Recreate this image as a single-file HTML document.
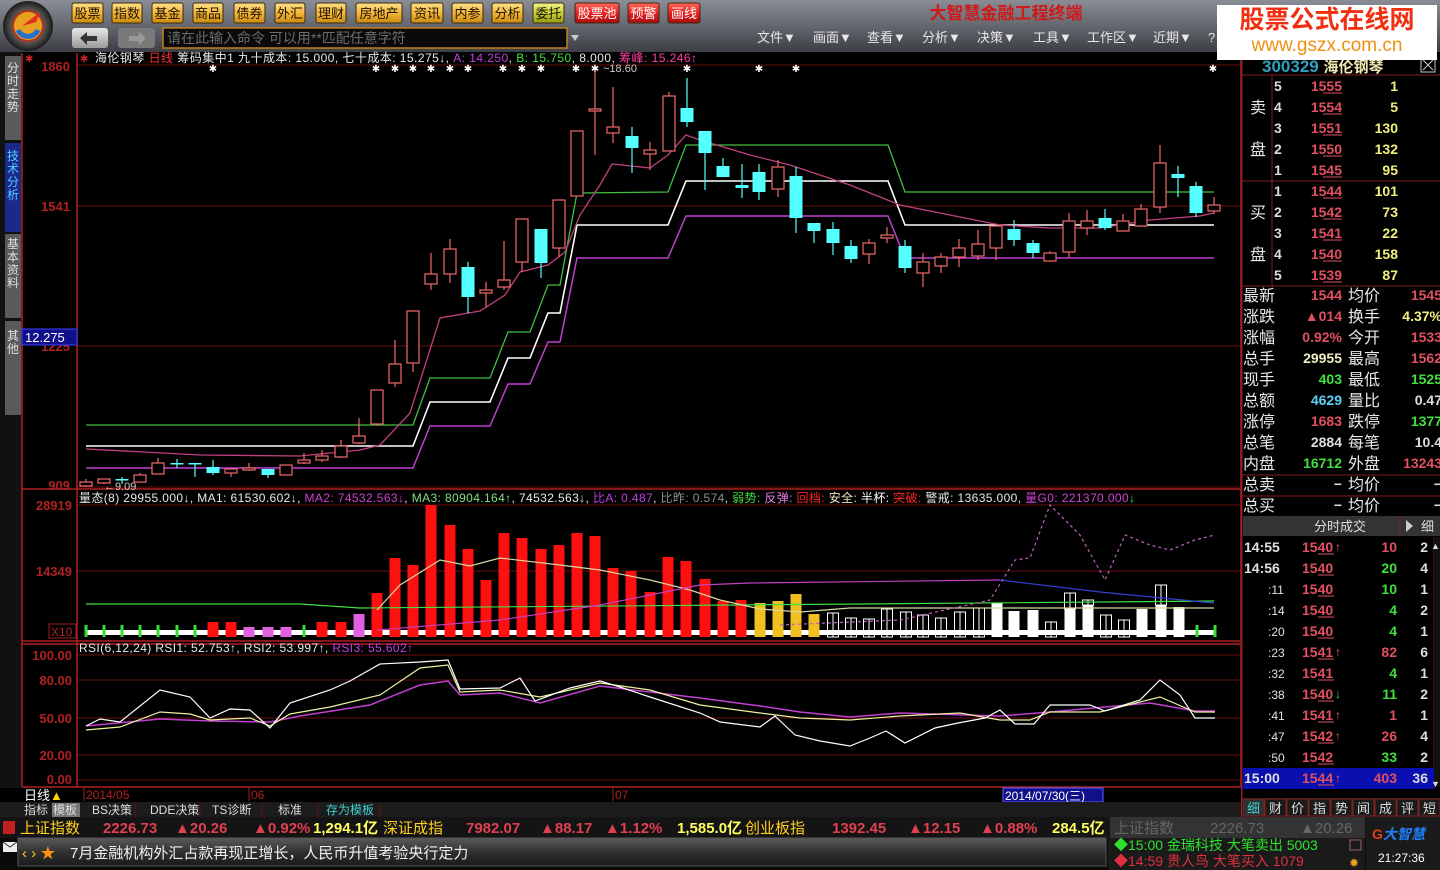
<!DOCTYPE html>
<html><head><meta charset="utf-8">
<style>
html,body{margin:0;padding:0;background:#000;width:1440px;height:870px;overflow:hidden}
svg{display:block}
text{font-family:"Liberation Sans","Noto Sans CJK SC",sans-serif}
</style></head>
<body>
<svg id="s" width="1440" height="870" viewBox="0 0 1440 870" xmlns="http://www.w3.org/2000/svg">
<defs>
<linearGradient id="top" x1="0" y1="0" x2="0" y2="1"><stop offset="0" stop-color="#8a8d95"/><stop offset="0.5" stop-color="#64676e"/><stop offset="1" stop-color="#3c3e44"/></linearGradient>
<linearGradient id="btn" x1="0" y1="0" x2="0" y2="1"><stop offset="0" stop-color="#fde08a"/><stop offset="0.5" stop-color="#f3b637"/><stop offset="1" stop-color="#c98a12"/></linearGradient>
<linearGradient id="btnr" x1="0" y1="0" x2="0" y2="1"><stop offset="0" stop-color="#ff6a5a"/><stop offset="0.5" stop-color="#e62020"/><stop offset="1" stop-color="#a80c0c"/></linearGradient>
<linearGradient id="btng" x1="0" y1="0" x2="0" y2="1"><stop offset="0" stop-color="#f2f28a"/><stop offset="0.5" stop-color="#c8d038"/><stop offset="1" stop-color="#8e9a10"/></linearGradient>
<linearGradient id="gb" x1="0" y1="0" x2="0" y2="1"><stop offset="0" stop-color="#e8e8e8"/><stop offset="1" stop-color="#9a9a9a"/></linearGradient>
<linearGradient id="news" x1="0" y1="0" x2="0" y2="1"><stop offset="0" stop-color="#5a5a5a"/><stop offset="0.5" stop-color="#303030"/><stop offset="1" stop-color="#1a1a1a"/></linearGradient>
<radialGradient id="logo" cx="0.5" cy="0.5" r="0.5"><stop offset="0.55" stop-color="#d03010"/><stop offset="0.7" stop-color="#505050"/><stop offset="1" stop-color="#1a1a1a"/></radialGradient>
</defs>

<rect x="0" y="0" width="1440" height="52" fill="url(#top)"/>
<circle cx="28" cy="26" r="25" fill="url(#logo)"/>
<circle cx="28" cy="26" r="14" fill="#e8a020"/>
<path d="M18 30 a11 11 0 0 0 20 0" stroke="#2070d0" stroke-width="5" fill="none"/>
<path d="M22 26 L40 12 L36 22 Z" fill="#e03020"/>
<g id="btns" font-size="13" text-anchor="middle" fill="#201000"></g>

<rect x="72" y="28" width="36" height="20" rx="3" fill="url(#gb)"/>
<path d="M80 38 l7 -6 v4 h10 v5 h-10 v4z" fill="#333"/>
<rect x="118" y="28" width="37" height="20" rx="3" fill="#7a7a7a"/>
<path d="M146 38 l-7 -6 v4 h-10 v5 h10 v4z" fill="#999"/>
<rect x="163" y="28" width="404" height="20" fill="#0a0a0a" stroke="#c08020" stroke-width="1.5"/>
<text x="167" y="43" font-size="14" fill="#6c6c6c">请在此输入命令    可以用**匹配任意字符</text>
<path d="M571 35 h8 l-4 6z" fill="#ccc"/>
<text x="1006" y="19" font-size="17" font-weight="bold" fill="#d01818" text-anchor="middle">大智慧金融工程终端</text>
<g font-size="13" fill="#e8e8e8">
<text x="757" y="42">文件▼</text><text x="813" y="42">画面▼</text><text x="867" y="42">查看▼</text><text x="922" y="42">分析▼</text><text x="977" y="42">决策▼</text><text x="1033" y="42">工具▼</text><text x="1087" y="42">工作区▼</text><text x="1153" y="42">近期▼</text><text x="1208" y="42">?</text>
</g>

<rect x="0" y="52" width="22" height="736" fill="#111"/>
<g font-size="12">
<rect x="5" y="56" width="16" height="84" fill="#5a5a5a"/>
<rect x="5" y="143" width="16" height="89" fill="#1a2a8a"/>
<rect x="5" y="234" width="16" height="84" fill="#5a5a5a"/>
<rect x="5" y="321" width="16" height="94" fill="#5a5a5a"/>
<g fill="#e0e0e0" text-anchor="middle">
<text x="13" y="72">分</text><text x="13" y="85">时</text><text x="13" y="98">走</text><text x="13" y="111">势</text>
<text x="13" y="160" fill="#50d0ff">技</text><text x="13" y="173" fill="#50d0ff">术</text><text x="13" y="186" fill="#50d0ff">分</text><text x="13" y="199" fill="#50d0ff">析</text>
<text x="13" y="248">基</text><text x="13" y="261">本</text><text x="13" y="274">资</text><text x="13" y="287">料</text>
<text x="13" y="340">其</text><text x="13" y="353">他</text>
</g></g>

<g stroke="#6a1010" stroke-width="1">
<line x1="77" y1="65" x2="1240" y2="65"/>
<line x1="77" y1="206" x2="1240" y2="206"/>
<line x1="77" y1="346" x2="1240" y2="346"/>
<line x1="77" y1="487" x2="1240" y2="487"/>
<line x1="77" y1="505" x2="1240" y2="505"/>
<line x1="77" y1="571" x2="1240" y2="571"/>
<line x1="77" y1="655" x2="1240" y2="655"/>
<line x1="77" y1="680" x2="1240" y2="680"/>
<line x1="77" y1="718" x2="1240" y2="718"/>
<line x1="77" y1="755" x2="1240" y2="755"/>
<line x1="77" y1="780" x2="1240" y2="780"/>
</g>
<g stroke="#b02020" stroke-width="1.5" fill="none">
<line x1="22" y1="489" x2="1240" y2="489"/>
<line x1="22" y1="641" x2="1240" y2="641"/>
<line x1="22" y1="644" x2="1240" y2="644"/>
<line x1="22" y1="787" x2="1240" y2="787"/>
<line x1="77" y1="53" x2="77" y2="787"/>
<line x1="22" y1="53" x2="22" y2="787"/>
<line x1="1241" y1="53" x2="1241" y2="817"/>
</g>
<text x="25" y="62" font-size="10" fill="#d02020">✱</text>
<text x="80" y="62" font-size="10" fill="#d02020">✱</text>

<g font-size="13" font-weight="bold" fill="#b02020" text-anchor="end">
<text x="70" y="71">1860</text><text x="70" y="211">1541</text><text x="70" y="351">1225</text><text x="70" y="490">909</text>
<text x="72" y="510">28919</text><text x="72" y="576">14349</text>
<text x="72" y="660">100.00</text><text x="72" y="685">80.00</text><text x="72" y="723">50.00</text><text x="72" y="760">20.00</text><text x="72" y="784">0.00</text>
</g>
<rect x="49" y="624" width="27" height="14" fill="none" stroke="#a02020"/>
<text x="51" y="636" font-size="12" fill="#b02020">X10</text>
<rect x="22" y="329" width="55" height="16" fill="#10108a" stroke="#4040ff"/>
<text x="25" y="342" font-size="13" fill="#fff">12.275</text>

<text x="95" y="62" font-size="12" fill="#e8e8e8" textLength="602" lengthAdjust="spacing">海伦钢琴 <tspan fill="#ff3030">日线</tspan> 筹码集中1 九十成本: 15.000, 七十成本: 15.275↓, <tspan fill="#c040e0">A: 14.250</tspan>, <tspan fill="#40e040">B: 15.750</tspan>, 8.000, <tspan fill="#ff40a0">筹峰: 15.246↑</tspan></text>
<g id="stars" fill="#fff" font-size="10" text-anchor="middle"></g>
<text x="603" y="72" font-size="11" fill="#ccc">~18.60</text>
<text x="104" y="490" font-size="11" fill="#ccc">←9.09</text>

<g fill="none" stroke-width="1.3">
<polyline stroke="#40c040" points="86,425 413,425 430,378 490,378 508,332 530,332 548,285 560,285 577,193 668,192 686,145 888,145 905,192 1214,192"/>
<polyline stroke="#fff" stroke-width="1.6" points="86,446 413,446 430,402 490,402 508,358 530,358 548,313 560,313 577,225 668,225 686,181 888,181 905,225 1214,225"/>
<polyline stroke="#c040d0" stroke-width="1.5" points="86,468 413,468 430,426 490,426 508,384 530,384 548,342 560,342 577,258 668,258 686,216 888,216 905,258 1214,258"/>
<polyline stroke="#c04080" points="86,449 200,455 300,456 360,450 380,445 410,413 440,318 480,311 505,295 520,272 548,265 565,252 580,215 600,185 612,164 650,168 668,155 686,135 700,140 750,155 790,165 820,175 850,185 900,205 950,215 1000,225 1050,228 1100,228 1150,220 1200,216 1214,213"/>
</g>
<g id="candles"></g>

<text x="79" y="502" font-size="12" fill="#e8e8e8" textLength="1056" lengthAdjust="spacing">量态(8) 29955.000↓, MA1: 61530.602↓, <tspan fill="#d040d0">MA2: 74532.563↓</tspan>, <tspan fill="#80e080">MA3: 80904.164↑</tspan>, 74532.563↓, <tspan fill="#c040e0">比A: 0.487</tspan>, <tspan fill="#909090">比昨: 0.574</tspan>, <tspan fill="#40e040">弱势:</tspan> <tspan fill="#e080e0">反弹:</tspan> <tspan fill="#ff2020">回档:</tspan> <tspan fill="#f0e0c0">安全:</tspan> <tspan fill="#fff">半杯:</tspan> <tspan fill="#ff2020">突破:</tspan> 警戒: 13635.000, <tspan fill="#d040d0">量G0: 221370.000</tspan><tspan fill="#40e040">↓</tspan></text>
<rect x="86" y="630" width="1128" height="5" fill="#fff"/>
<g id="vol"></g>
<g fill="none" stroke-width="1.2">
<polyline stroke="#40e040" points="86,604 200,604 300,604 360,608 860,604 1214,601"/>
<polyline stroke="#d8d8a0" points="377,610 400,585 440,560 470,566 500,558 560,565 600,570 650,580 690,590 720,600 760,609 800,612 850,608 1000,608 1214,608"/>
<polyline stroke="#c040c0" points="377,630 500,620 600,605 700,585 750,583 1000,580"/>
<polyline stroke="#3040d0" points="1000,580 1100,592 1214,603"/>
<polyline stroke="#c060c0" stroke-dasharray="3,3" points="780,625 900,620 990,600 1015,560 1030,558 1050,505 1080,535 1105,580 1125,535 1150,545 1170,550 1195,540 1215,535"/>
</g>

<text x="79" y="652" font-size="12" fill="#e8e8e8" textLength="334" lengthAdjust="spacing">RSI(6,12,24) RSI1: 52.753↑, RSI2: 53.997↑, <tspan fill="#c040e0">RSI3: 55.602↑</tspan></text>
<g fill="none" stroke-width="1.2">
<polyline stroke="#c040d0" stroke-width="1.5" points="86,726 160,719 210,721 270,722 300,716 370,705 420,685 448,681 460,695 500,693 540,703 600,686 650,692 700,698 760,706 800,712 850,717 900,713 1000,716 1050,712 1150,703 1195,711 1215,711"/>
<polyline stroke="#f0f0a0" points="86,730 120,727 160,712 190,714 210,720 250,718 270,726 290,714 330,707 380,695 420,668 448,665 460,692 500,690 540,697 600,683 650,690 700,705 760,713 800,718 850,720 900,716 960,713 1000,720 1030,720 1050,712 1100,712 1160,697 1195,712 1215,712"/>
<polyline stroke="#fff" points="86,726 100,719 120,722 160,690 190,697 210,718 230,709 250,710 270,728 290,703 330,690 350,681 380,664 420,662 448,660 460,689 500,688 520,678 535,701 570,688 600,681 620,687 650,697 700,713 720,722 760,727 775,716 795,735 820,741 850,746 870,738 886,731 905,743 935,728 958,723 985,718 1000,710 1015,724 1034,724 1050,705 1090,705 1105,711 1140,700 1160,680 1180,695 1195,718 1215,718"/>
</g>

<rect x="22" y="788" width="1219" height="14" fill="#000"/>
<text x="24" y="800" font-size="13" fill="#fff">日线<tspan fill="#ffd000">▲</tspan></text>
<line x1="84" y1="788" x2="84" y2="801" stroke="#a02020"/>
<text x="86" y="799" font-size="12" fill="#b02020">2014/05</text>
<line x1="249" y1="788" x2="249" y2="801" stroke="#a02020"/>
<text x="251" y="799" font-size="12" fill="#b02020">06</text>
<line x1="613" y1="788" x2="613" y2="801" stroke="#a02020"/>
<text x="615" y="799" font-size="12" fill="#b02020">07</text>
<rect x="1003" y="788" width="100" height="14" fill="#10108a" stroke="#6060ff"/>
<text x="1005" y="800" font-size="12" fill="#fff">2014/07/30(三)</text>
<rect x="0" y="802" width="1241" height="15" fill="#1c1c1c"/>
<rect x="52" y="803" width="28" height="14" fill="#777"/>
<g font-size="12" fill="#ddd">
<text x="24" y="814">指标</text><text x="53" y="814">模板</text><text x="92" y="814">BS决策</text><text x="150" y="814">DDE决策</text><text x="212" y="814">TS诊断</text><text x="278" y="814">标准</text><text x="326" y="814" fill="#40d0d0">存为模板</text>
</g>
<g stroke="#6a1010"><line x1="135" y1="803" x2="135" y2="817"/><line x1="200" y1="803" x2="200" y2="817"/><line x1="262" y1="803" x2="262" y2="817"/><line x1="318" y1="803" x2="318" y2="817"/><line x1="380" y1="803" x2="380" y2="817"/></g>

<rect x="0" y="817" width="1440" height="21" fill="#141414"/>
<rect x="3" y="821" width="12" height="13" fill="#c02020"/>
<g font-size="15" font-weight="bold">
<text x="20" y="833" fill="#ffd020" font-weight="normal">上证指数</text>
<text x="103" y="833" fill="#e04050">2226.73</text><text x="175" y="833" fill="#e04050">▲20.26</text><text x="253" y="833" fill="#e04050">▲0.92%</text>
<text x="313" y="833" fill="#ffff60">1,294.1亿</text>
<text x="383" y="833" fill="#ffd020" font-weight="normal">深证成指</text>
<text x="466" y="833" fill="#e04050">7982.07</text><text x="540" y="833" fill="#e04050">▲88.17</text><text x="605" y="833" fill="#e04050">▲1.12%</text>
<text x="677" y="833" fill="#ffff60">1,585.0亿</text>
<text x="745" y="833" fill="#ffd020" font-weight="normal">创业板指</text>
<text x="832" y="833" fill="#e04050">1392.45</text><text x="908" y="833" fill="#e04050">▲12.15</text><text x="980" y="833" fill="#e04050">▲0.88%</text>
<text x="1052" y="833" fill="#ffff60">284.5亿</text>
</g>
<rect x="1110" y="817" width="255" height="21" fill="#333"/>
<g font-size="15" fill="#666"><text x="1114" y="833">上证指数</text><text x="1210" y="833">2226.73</text><text x="1300" y="833">▲20.26</text></g>
<rect x="0" y="838" width="1440" height="32" fill="#0a0a0a"/>
<rect x="3" y="842" width="14" height="10" fill="#eee"/><path d="M3 842 l7 5 l7 -5" stroke="#333" fill="none"/>
<rect x="18" y="838" width="1088" height="28" fill="url(#news)" stroke="#555"/>
<text x="22" y="858" font-size="15" fill="#ffd020">‹ › <tspan fill="#ff9010">★</tspan></text>
<text x="70" y="858" font-size="15" fill="#f0f0f0">7月金融机构外汇占款再现正增长，人民币升值考验央行定力</text>
<rect x="1108" y="838" width="257" height="32" fill="#1a1a1a"/>
<text x="1114" y="850" font-size="14" fill="#30e030">◆15:00 金瑞科技 大笔卖出 5003</text>
<text x="1114" y="866" font-size="14" fill="#e03040">◆14:59 贵人鸟  大笔买入 1079</text>
<rect x="1350" y="840" width="11" height="10" fill="none" stroke="#a06060"/>
<text x="1349" y="867" font-size="12" fill="#f0a020">✹</text>
<rect x="1366" y="817" width="74" height="53" fill="#1a1a1a"/>
<text x="1372" y="839" font-size="14" font-weight="bold" fill="#e04020">G<tspan fill="#2080ff" font-style="italic">大智慧</tspan></text>
<text x="1378" y="862" font-size="12" fill="#fff">21:27:36</text>

<rect x="1242" y="53" width="198" height="745" fill="#000"/>
<g stroke="#802020" stroke-width="1">
<line x1="1242" y1="75" x2="1440" y2="75"/><line x1="1242" y1="181" x2="1440" y2="181"/><line x1="1242" y1="286" x2="1440" y2="286"/>
<line x1="1242" y1="475" x2="1440" y2="475"/><line x1="1242" y1="496" x2="1440" y2="496"/>
<line x1="1272" y1="76" x2="1272" y2="286"/>
<line x1="1242" y1="53" x2="1242" y2="817"/>
<line x1="1434" y1="537" x2="1434" y2="788"/>
</g>
<text x="1262" y="72" font-size="17" font-weight="bold" fill="#30a0c0">300329 <tspan fill="#f0e8b0" font-size="15">海伦钢琴</tspan></text>
<rect x="1421" y="58" width="14" height="14" fill="none" stroke="#ccc"/><path d="M1423 60l10 10M1433 60l-10 10" stroke="#ccc"/>
<g font-size="16" fill="#e8e8e8"><text x="1250" y="113">卖</text><text x="1250" y="155">盘</text><text x="1250" y="218">买</text><text x="1250" y="260">盘</text></g>
<g id="ob" font-size="14" font-weight="bold"></g>
<g id="st"></g>
<rect x="1243" y="516" width="197" height="20" fill="#333"/>
<text x="1340" y="531" font-size="13" fill="#ddd" text-anchor="middle">分时成交</text>
<line x1="1400" y1="516" x2="1400" y2="536" stroke="#802020"/>
<path d="M1406 520 l7 6 l-7 6z" fill="#ccc"/>
<text x="1421" y="531" font-size="13" fill="#ddd">细</text>
<rect x="1243" y="768" width="191" height="21" fill="#0a10b0"/>
<g id="tr" font-size="14" font-weight="bold"></g>
<rect x="1434" y="537" width="6" height="250" fill="#111"/>
<text x="1431" y="549" font-size="9" fill="#ddd">▲</text><text x="1431" y="787" font-size="9" fill="#ddd">▼</text>
<rect x="1242" y="798" width="198" height="19" fill="#1a1a1a"/>
<g font-size="13" fill="#ddd" id="rt"></g>
</svg>
<script>
var NS="http://www.w3.org/2000/svg";
function el(p,t,a,txt){var e=document.createElementNS(NS,t);for(var k in a)e.setAttribute(k,a[k]);if(txt!=null)e.textContent=txt;document.getElementById(p).appendChild(e);return e;}
[["股票",72,103],["指数",112,142],["基金",152,183],["商品",193,223],["债券",234,265],["外汇",275,305],["理财",316,346],["房地产",356,402],["资讯",411,443],["内参",452,483],["分析",492,523],["委托",533,564,"g"],["股票池",575,619,"r"],["预警",628,659,"r"],["画线",668,700,"r"]].forEach(function(b){
 el("btns","rect",{x:b[1],y:3,width:b[2]-b[1],height:20,rx:2,fill:b[3]=="r"?"url(#btnr)":b[3]=="g"?"url(#btng)":"url(#btn)",stroke:"#3a2a10"});
 el("btns","text",{x:(b[1]+b[2])/2,y:18,fill:b[3]=="r"?"#fff":"#201000"},b[0]);
});
[213,376,395,413,431,450,468,503,522,541,576,595,687,759,796,1213].forEach(function(x){el("stars","text",{x:x,y:72},"✱");});
var C=[["r",86,482,486,479,487],["r",104,479,483,479,484],["c",122,479,480,477,484],["r",140,475,482,473,482],["r",158,463,474,458,474],["c",177,463,464,459,468],["c",195,463,464,463,477],["c",213,467,473,460,475],["r",231,469,473,469,477],["r",249,468,470,463,471],["c",268,469,475,469,478],["r",286,465,475,465,475],["r",304,460,463,453,464],["r",322,456,460,450,462],["r",341,446,457,440,458],["r",359,436,443,418,444],["r",377,390,424,390,426],["r",395,364,383,340,387],["r",413,311,363,311,372],["r",431,274,284,253,290],["r",450,249,274,239,283],["c",468,267,297,262,313],["r",486,290,293,282,307],["r",504,280,287,241,290],["r",522,219,262,219,272],["c",541,229,263,229,278],["r",559,200,248,200,257],["r",577,131,196,131,196],["r",595,109,111,70,155],["r",613,127,133,87,143],["c",632,136,148,127,173],["r",650,150,154,142,170],["r",669,96,151,92,151],["c",687,108,122,78,127],["c",705,131,153,131,190],["c",723,166,177,158,177],["c",742,185,188,164,198],["c",759,172,192,164,200],["r",778,167,189,160,197],["c",796,176,218,167,233],["c",814,223,231,223,243],["c",833,229,243,222,255],["c",851,246,259,240,263],["r",869,243,254,239,264],["r",887,235,238,227,243],["c",905,246,268,240,273],["r",923,262,273,253,287],["r",941,257,266,253,273],["r",959,248,257,239,267],["r",978,244,256,230,260],["r",996,226,248,226,260],["c",1014,229,240,220,246],["c",1033,243,253,240,258],["r",1050,253,261,251,262],["r",1069,221,252,213,257],["r",1087,221,228,210,235],["c",1105,218,228,209,230],["r",1123,221,231,214,231],["r",1141,209,226,204,227],["r",1160,163,207,145,213],["c",1178,174,178,166,197],["c",1196,186,213,182,217],["r",1214,205,211,197,214]];
C.forEach(function(c){var col=c[0]=="r"?"#f06a6a":"#54ffff";var x=c[1];
 el("candles","line",{x1:x,y1:c[4],x2:x,y2:c[5],stroke:col,"stroke-width":1.2});
 var h=Math.max(c[3]-c[2],1.5);
 if(c[0]=="r")el("candles","rect",{x:x-6,y:c[2],width:12,height:h,fill:"#000",stroke:col,"stroke-width":1.2});
 else el("candles","rect",{x:x-6.5,y:c[2],width:13,height:h,fill:col});
});
var V=[[377,593,"r"],[395,558,"r"],[413,565,"r"],[431,505,"r"],[450,525,"r"],[468,549,"r"],[486,580,"r"],[504,533,"r"],[522,538,"r"],[541,549,"r"],[559,545,"r"],[577,533,"r"],[595,536,"r"],[613,568,"r"],[631,571,"r"],[650,592,"r"],[668,557,"r"],[686,561,"r"],[705,579,"r"],[723,601,"r"],[741,600,"r"],[760,603,"y"],[778,601,"y"],[796,594,"y"],[814,614,"y"],[833,613,"h"],[851,618,"h"],[869,619,"h"],[887,609,"h"],[906,612,"h"],[923,615,"h"],[941,618,"h"],[960,612,"h"],[979,608,"h"],[997,603,"w"],[1014,611,"w"],[1033,610,"w"],[1051,622,"h"],[1070,609,"w",593],[1088,605,"w",600],[1106,615,"h"],[1124,620,"h"],[1142,609,"w"],[1161,605,"w",585],[1179,607,"w"]];
V.forEach(function(v){var x=v[0]-5.5,t=v[1],h=637-t;
 if(v[2]=="r")el("vol","rect",{x:x,y:t,width:11,height:h,fill:"#ff1010"});
 else if(v[2]=="y")el("vol","rect",{x:x,y:t,width:11,height:h,fill:"#f0c020"});
 else if(v[2]=="w")el("vol","rect",{x:x,y:t,width:11,height:h,fill:"#fff"});
 else{el("vol","rect",{x:x,y:t,width:11,height:h,fill:"none",stroke:"#fff"});el("vol","line",{x1:v[0],y1:t,x2:v[0],y2:637,stroke:"#fff"});}
 if(v[3]){el("vol","rect",{x:x,y:v[3],width:11,height:t-v[3],fill:"none",stroke:"#fff"});el("vol","line",{x1:v[0],y1:v[3],x2:v[0],y2:t,stroke:"#fff"});}
});
[[86,"g"],[104,"g"],[122,"g"],[140,"g"],[158,"g"],[177,"g"],[195,"g"],[213,"r"],[231,"r"],[249,"m"],[268,"m"],[286,"m"],[304,"g"],[322,"r"],[341,"r"],[359,"m"],[1197,"g"],[1215,"g"]].forEach(function(v){
 var col=v[1]=="g"?"#30e030":v[1]=="m"?"#e060e0":"#ff1010";var t=v[1]=="r"?622:v[1]=="m"?(v[0]==359?614:627):625;
 if(v[1]=="g")el("vol","rect",{x:v[0]-1.5,y:t,width:3,height:637-t,fill:col});
 else el("vol","rect",{x:v[0]-5.5,y:t,width:11,height:637-t,fill:col});
});
var OB=[["5","1555","1",86],["4","1554","5",107],["3","1551","130",128],["2","1550","132",149],["1","1545","95",170],["1","1544","101",191],["2","1542","73",212],["3","1541","22",233],["4","1540","158",254],["5","1539","87",275]];
OB.forEach(function(o){var y=o[3]+5;el("ob","text",{x:1274,y:y,fill:"#ddd"},o[0]);el("ob","text",{x:1342,y:y,fill:"#e05060","text-anchor":"end"},o[1]);el("ob","line",{x1:1323,y1:y+2,x2:1342,y2:y+2,stroke:"#e05060"});el("ob","text",{x:1398,y:y,fill:"#f0f080","text-anchor":"end"},o[2]);});
var ST=[["最新","1544","#e05060","均价","1545","#e05060"],["涨跌","▲014","#e05060","换手","4.37%","#f0f080"],["涨幅","0.92%","#e05060","今开","1533","#e05060"],["总手","29955","#f0f0c0","最高","1562","#e05060"],["现手","403","#40e040","最低","1525","#40e040"],["总额","4629","#60d0f0","量比","0.47","#ddd"],["涨停","1683","#e05060","跌停","1377","#40e040"],["总笔","2884","#ddd","每笔","10.4","#ddd"],["内盘","16712","#40e040","外盘","13243","#e05060"],["总卖","−","#ddd","均价","−","#ddd"],["总买","−","#ddd","均价","−","#ddd"]];
ST.forEach(function(s,i){var y=301+i*21;
 el("st","text",{x:1243,y:y,"font-size":16,fill:"#e8e8e8"},s[0]);
 el("st","text",{x:1342,y:y-1,"font-size":14,"font-weight":"bold",fill:s[2],"text-anchor":"end"},s[1]);
 el("st","text",{x:1348,y:y,"font-size":16,fill:"#e8e8e8"},s[3]);
 el("st","text",{x:1442,y:y-1,"font-size":14,"font-weight":"bold",fill:s[5],"text-anchor":"end"},s[4]);
});
var TR=[["14:55","1540","u","10","#e05060","2"],["14:56","1540","","20","#40e040","4"],[":11","1540","","10","#40e040","1"],[":14","1540","","4","#40e040","2"],[":20","1540","","4","#40e040","1"],[":23","1541","u","82","#e05060","6"],[":32","1541","","4","#40e040","1"],[":38","1540","d","11","#40e040","2"],[":41","1541","u","1","#e05060","1"],[":47","1542","u","26","#e05060","4"],[":50","1542","","33","#40e040","2"],["15:00","1544","u","403","#e05060","36"]];
TR.forEach(function(t,i){var y=552+i*21;var big=t[0].length==5;
 el("tr","text",{x:big?1244:1268,y:y,fill:"#e0e0e0","font-size":big?14:12,"font-weight":big?"bold":"normal"},t[0]);
 el("tr","text",{x:1302,y:y,fill:"#e05060"},t[1]);
 el("tr","line",{x1:1318,y1:y+2,x2:1334,y2:y+2,stroke:"#e05060"});
 if(t[2])el("tr","text",{x:1335,y:y-1,fill:t[2]=="u"?"#ff6060":"#40e040","font-size":12},t[2]=="u"?"↑":"↓");
 el("tr","text",{x:1397,y:y,fill:t[4],"text-anchor":"end"},t[3]);
 el("tr","text",{x:1428,y:y,fill:"#ddd","text-anchor":"end"},t[5]);
});
["细","财","价","指","势","闻","成","评","短"].forEach(function(c,i){var x=1243+i*22;
 el("rt","rect",{x:x,y:799,width:21,height:17,fill:i==0?"#303030":"#1a1a1a",stroke:"#802020"});
 el("rt","text",{x:x+4,y:813,fill:i==0?"#40d0d0":"#ddd"},c);
});
</script>
<div style="position:absolute;left:1217px;top:5px;width:220px;height:55px;background:#fff;text-align:center;font-family:'Liberation Sans','Noto Sans CJK SC',sans-serif">
<div style="color:#f03010;font-size:25px;font-weight:bold;line-height:30px;margin-top:0px">股票公式在线网</div>
<div style="color:#f09010;font-size:19px;line-height:22px">www.gszx.com.cn</div>
</div>
</body></html>
